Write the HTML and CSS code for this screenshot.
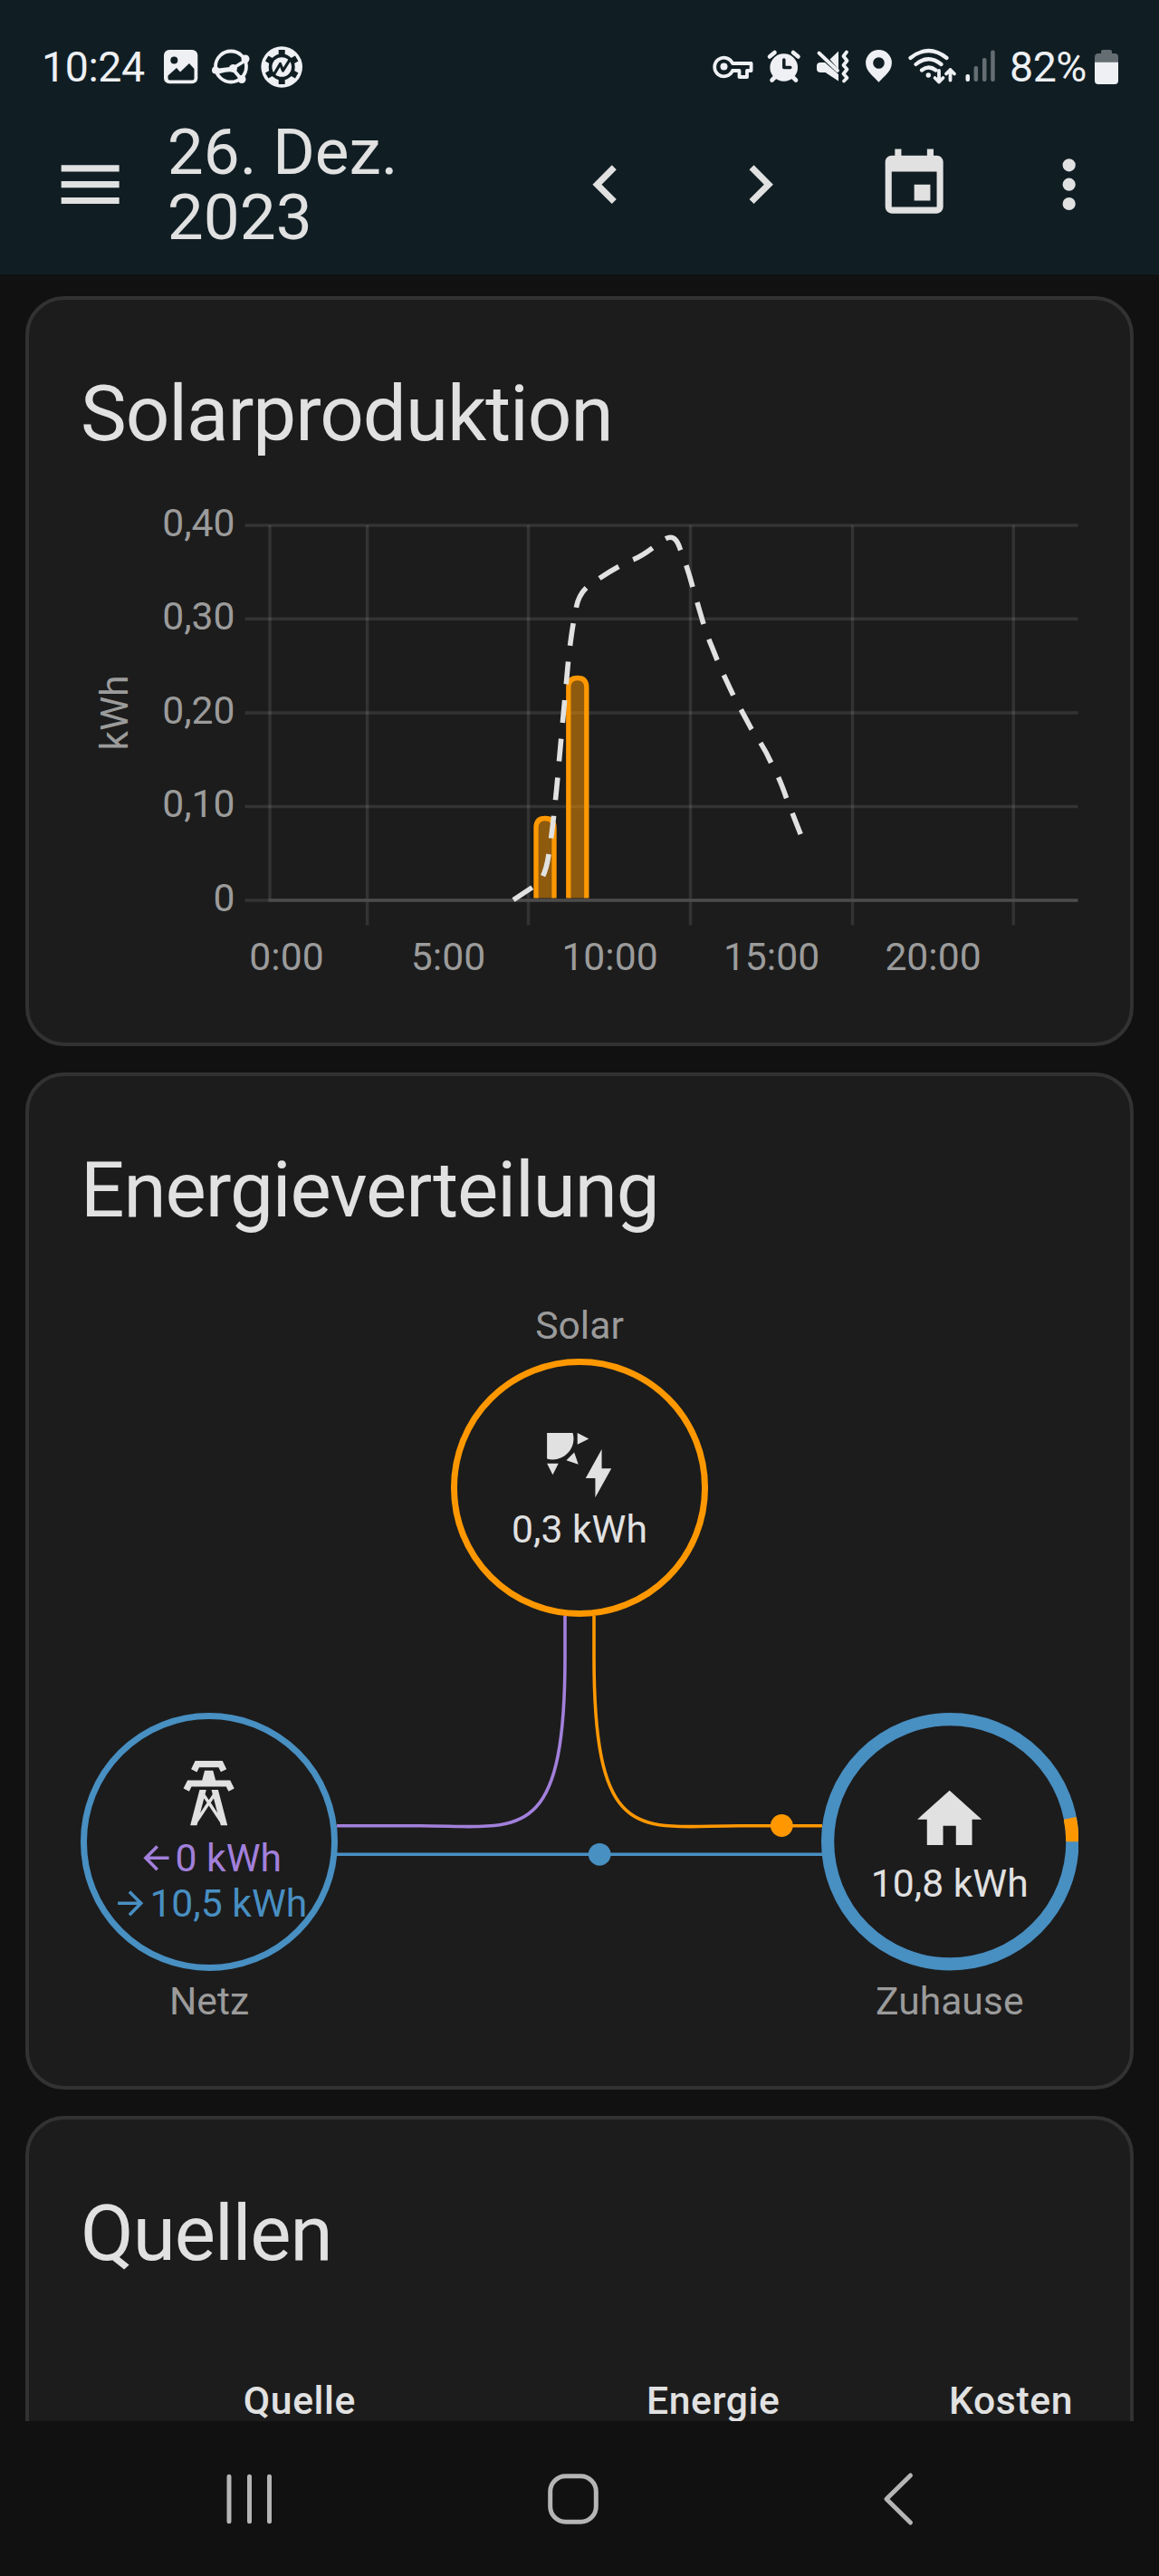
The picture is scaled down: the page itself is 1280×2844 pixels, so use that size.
FILE: index.html
```
<!DOCTYPE html>
<html lang="de">
<head>
    <meta charset="UTF-8">
    <title>Energie</title>
    <meta name="viewport" content="width=device-width, initial-scale=1.0">
    <link rel="stylesheet" href="styles.css">
</head>
<body>
    <header>
        <div class="status-bar">
            <span class="clock">10:24</span>
            <svg class="status-left" viewBox="174 46 166 56">
                <rect x="181" y="55" width="37.3" height="37.3" rx="6"/>
                <circle class="cut" cx="192.3" cy="66.5" r="4"/>
                <path class="cut" d="M185.5 83.5L195 75l4 4.5 10-9.5 5.5 6v10.5a2 2 0 0 1-2 2H187.5a2 2 0 0 1-2-2Z"/>
                <!-- ball with joints -->
                <g class="line">
                    <circle cx="255" cy="73.5" r="17"/>
                    <path d="M237 78l20-2.500 16-10M257 76l10 12M240 80q9-3 17-3"/>
                </g>
                <circle cx="257.5" cy="75.5" r="4.5"/>
                <circle cx="271" cy="65" r="4.5"/>
                <circle cx="267" cy="87.5" r="4.5"/>
                <circle cx="238" cy="77.5" r="4"/>
                <!-- gear badge -->
                <circle cx="311.2" cy="74" r="22.8"/>
                <circle class="cut" cx="311.2" cy="74" r="14.5"/>
                <path class="teeth" d="M311.200 55v38M294.700 64.500l33 19M294.700 83.500l33-19"/>
                <circle cx="311.2" cy="74" r="10.8"/>
                <path class="slash" d="M303 81.500l6.500-11 3 7.500 7.500-12"/>
            </svg>
            <svg class="status-right" viewBox="780 46 326 56">
                <path class="line" d="M809 70h20.600v8H825v7h-8.500v-7H809a10.300 10.300 0 1 1 0-8Z"/>
                <circle cx="799.5" cy="73.5" r="4"/>
                <circle cx="865.7" cy="74.5" r="15.3"/>
                <path class="thick" d="M850 62.500l5.500-4.500M876 58l5.500 4.500M856 85l-3.500 3.500M875.500 85l3.500 3.500"/>
                <path class="cutline" d="M865.800 66v8.500h7"/>
                <path d="M926 56.500v20L916.500 65.500ZM902 73q0-4 4-4h5l15 13v7.500L911.500 80h-5q-4.500 0-4.500-4Z"/>
                <path class="line" d="M904.500 58.500L925 78M935 57.500l-3.500 4.500 4 5-4 5 4 4.500-4 5 4 4.500-3.500 3.500"/>
                <path d="M970.500 55a14.400 14.400 0 0 0-14.400 14.400c0 9.500 9 14.600 14.400 21.400 5.400-6.800 14.400-11.900 14.400-21.400A14.400 14.400 0 0 0 970.500 55Zm0 8.200a6.300 6.300 0 1 1 0 12.600a6.300 6.300 0 0 1 0-12.600Z"/>
                <path class="arc" d="M1005.500 64q20-16 40 0M1011.500 71q13.800-11.500 28 0M1018 77.500q7.500-6 15.500 0"/>
                <circle cx="1025.3" cy="83" r="2.7"/>
                <path class="line" d="M1037 78v12.500M1032.500 86l4.500 4.500 4.500-4.500M1049.500 88.500V77M1045 81.500l4.500-4.500 4.500 4.500"/>
                <rect x="1066.5" y="82" width="4.5" height="8" rx="2"/>
                <g class="dim">
                    <rect x="1075.6" y="73" width="4.5" height="17" rx="2"/>
                    <rect x="1085" y="64" width="4.5" height="26" rx="2"/>
                    <rect x="1094.2" y="55.5" width="4.5" height="34.5" rx="2"/>
                </g>
            </svg>
            <span class="percent">82%</span>
            <svg class="battery" viewBox="0 0 26 38">
                <path class="dim" d="M7 4V2q0-2 2-2h8q2 0 2 2v2h3q4 0 4 4v6H0V8q0-4 4-4Z"/>
                <path d="M0 13.800h26V34q0 4-4 4H4q-4 0-4-4Z"/>
            </svg>
        </div>
        <div class="toolbar">
            <div class="icon-btn"><svg viewBox="0 0 24 24"><path d="M3,6H21V8H3V6M3,11H21V13H3V11M3,16H21V18H3V16Z"/></svg></div>
            <div class="date">26. Dez. 2023</div>
            <div class="icon-btn"><svg viewBox="0 0 24 24"><path d="M15.41,16.58L10.83,12L15.41,7.41L14,6L8,12L14,18L15.41,16.58Z"/></svg></div>
            <div class="icon-btn"><svg viewBox="0 0 24 24"><path d="M8.59,16.58L13.17,12L8.59,7.41L10,6L16,12L10,18L8.59,16.58Z"/></svg></div>
            <div class="icon-btn"><svg viewBox="0 0 24 24"><path d="M19,19H5V8H19M16,1V3H8V1H6V3H5C3.89,3 3,3.89 3,5V19A2,2 0 0,0 5,21H19A2,2 0 0,0 21,19V5C21,3.89 20.1,3 19,3H18V1M17,12H12V17H17V12Z"/></svg></div>
            <div class="icon-btn"><svg viewBox="0 0 24 24"><path d="M12,16A2,2 0 0,1 14,18A2,2 0 0,1 12,20A2,2 0 0,1 10,18A2,2 0 0,1 12,16M12,10A2,2 0 0,1 14,12A2,2 0 0,1 12,14A2,2 0 0,1 10,12A2,2 0 0,1 12,10M12,4A2,2 0 0,1 14,6A2,2 0 0,1 12,8A2,2 0 0,1 10,6A2,2 0 0,1 12,4Z"/></svg></div>
        </div>
    </header>

    <main>
        <section class="card card-solar">
            <h1>Solarproduktion</h1>
            <svg class="chart" viewBox="32 544 1216 606">
                <g class="grid">
                    <path d="M270.500 580H1190.500M270.500 683.200H1190.500M270.500 787H1190.500M270.500 890.500H1190.500M270.500 994H298"/>
                    <path d="M298 580V994M405.600 580V1021.500M583.500 580V1021.500M762.500 580V1021.500M941.500 580V1021.500M1119.300 580V1021.500"/>
                </g>
                <path class="base" d="M296.500 994H1190.500"/>
                <g class="bars">
                    <path d="M592 991.500V914q0-10.500 10-10.500t10 10.500v77.500"/>
                    <path d="M627.800 991.500V759q0-10.500 10-10.500t10 10.500v232.500"/>
                </g>
                <path class="forecast" d="M567 993.500L592 977Q602 970 605.900 944Q612 905 617.400 841L627.500 731Q631 697 636.200 671.400C639 656 646 648 661 639.200C676 629 690 621.500 698.700 618C712 613 724 602 732 596.500C742 590 747 593 751.500 607C757 620 762 637 765 648L777 689C780 700 786 713 792 728.600C799 745 803 753 810 768C818 783 823 792 830 805C838 817 845 827 851.600 842C860 858 863 865 868.500 881L884.200 921"/>
                <g class="y-labels">
                    <text x="259.5" y="592">0,40</text>
                    <text x="259.5" y="695">0,30</text>
                    <text x="259.5" y="799">0,20</text>
                    <text x="259.5" y="902">0,10</text>
                    <text x="259.5" y="1005.5">0</text>
                </g>
                <g class="x-labels">
                    <text x="316.5" y="1071">0:00</text>
                    <text x="495" y="1071">5:00</text>
                    <text x="673.5" y="1071">10:00</text>
                    <text x="852" y="1071">15:00</text>
                    <text x="1030.5" y="1071">20:00</text>
                    <text transform="translate(141 787) rotate(-90)">kWh</text>
                </g>
            </svg>
        </section>

        <section class="card card-flow">
            <h1>Energieverteilung</h1>
            <div class="flow">
                <svg class="lines" viewBox="32 1401 1216 903">
                    <path class="return" d="M624 1784V1829c0,213 -53,186.700 -160,186.700H372"/>
                    <path class="solar" d="M656 1784V1829c0,213 53,186.700 160,186.700H908"/>
                    <path class="grid-line" d="M372 2047.300H908"/>
                    <circle class="solar-dot" cx="863.3" cy="2015.5" r="12.4"/>
                    <circle class="grid-dot" cx="662.2" cy="2047.3" r="12.4"/>
                </svg>
                <div class="node node-solar">
                    <span class="label">Solar</span>
                    <div class="circle">
                        <svg class="icon" viewBox="0 0 24 24"><path d="M11.45,2V5.55L15,3.77L11.45,2M10.45,8L8,10.46L11.75,11.71L10.45,8M2,11.45L3.77,15L5.55,11.45H2M10,2H2V10C2.57,10.17 3.17,10.25 3.77,10.25C7.35,10.26 10.26,7.35 10.27,3.75C10.26,3.16 10.17,2.57 10,2M17,22V16H14L19,7V13H22L17,22Z"/></svg>
                        <span>0,3 kWh</span>
                    </div>
                </div>
                <div class="node node-grid">
                    <div class="circle">
                        <svg class="icon" viewBox="0 0 24 24"><path d="M8.28,5.45L6.5,4.55L7.76,2H16.23L17.5,4.55L15.72,5.44L15,4H9L8.28,5.45M18.62,8H14.09L13.3,5H10.7L9.91,8H5.38L4.1,10.55L5.89,11.44L6.62,10H17.38L18.1,11.45L19.89,10.56L18.62,8M17.77,22H15.7L15.46,21.1L12,15.9L8.53,21.1L8.3,22H6.23L9.12,11H11.19L10.83,12.35L12,14.1L13.16,12.35L12.81,11H14.88L17.77,22M11.4,15L10.5,13.65L9.32,18.13L11.4,15M14.68,18.12L13.5,13.64L12.6,15L14.68,18.12Z"/></svg>
                        <span class="to-grid"><svg viewBox="0 0 24 24"><path d="M20,11V13H8L13.5,18.5L12.08,19.92L4.16,12L12.08,4.08L13.5,5.5L8,11H20Z"/></svg>0 kWh</span>
                        <span class="from-grid"><svg viewBox="0 0 24 24"><path d="M4,11V13H16L10.5,18.5L11.92,19.92L19.84,12L11.92,4.08L10.5,5.5L16,11H4Z"/></svg>10,5 kWh</span>
                    </div>
                    <span class="label">Netz</span>
                </div>
                <div class="node node-home">
                    <div class="circle">
                        <svg class="ring" viewBox="0 0 80 80">
                            <circle class="ring-grid" cx="40" cy="40" r="38"/>
                            <path class="ring-solar" d="M78 40A38 38 0 0 0 77.260 32.700"/>
                        </svg>
                        <svg class="icon" viewBox="0 0 24 24"><path d="M10,20V14H14V20H19V12H22L12,3L2,12H5V20H10Z"/></svg>
                        <span>10,8 kWh</span>
                    </div>
                    <span class="label">Zuhause</span>
                </div>
            </div>
        </section>

        <section class="card card-sources">
            <h1>Quellen</h1>
            <div class="table-head">
                <span>Quelle</span>
                <span>Energie</span>
                <span>Kosten</span>
            </div>
        </section>
    </main>

    <nav>
        <svg viewBox="0 0 60 60"><path d="M8 5.300V54.700M30.500 5.300V54.700M52.500 5.300V54.700"/></svg>
        <svg viewBox="0 0 60 60"><rect x="3.7" y="4.7" width="50.6" height="50.6" rx="17"/></svg>
        <svg viewBox="0 0 60 60"><path d="M42.500 4L16 30L42.500 56"/></svg>
    </nav>
</body>
</html>
```
FILE: styles.css
```
* {
    box-sizing: border-box;
}
body {
    margin: 0;
    width: 1280px;
    height: 2844px;
    overflow: hidden;
    background: #111;
    color: #e1e1e1;
    font-family: Roboto, sans-serif;
    font-size: 42.67px;
    display: flex;
    flex-direction: column;
}
svg {
    display: block;
    flex: none;
    fill: currentColor;
}

/* Header */
header {
    height: 303px;
    flex: none;
    background: #101e24;
}
.status-bar {
    height: 104px;
    padding: 44px 0 0 46px;
    display: flex;
    align-items: flex-start;
    color: #eef0f3;
    font-size: 46.5px;
}
.clock, .percent {
    line-height: 60px;
}
.clock {
    width: 128px;
    letter-spacing: -0.4px;
}
.status-left, .status-right {
    height: 56px;
    margin-top: 2px;
}
.status-left {
    width: 166px;
}
.status-right {
    width: 326px;
    margin-left: 440px;
}
.percent {
    width: 102.5px;
    padding-left: 9px;
    letter-spacing: -0.5px;
}
.battery {
    width: 26px;
    height: 38px;
    margin-top: 10.5px;
}
.dim {
    opacity: 0.38;
}
.cut {
    fill: #101e24;
}
.line, .arc, .thick, .cutline, .teeth, .slash {
    fill: none;
    stroke: currentColor;
    stroke-width: 3.8;
    stroke-linecap: round;
    stroke-linejoin: round;
}
.arc {
    stroke-width: 4.2;
}
.thick {
    stroke-width: 4.6;
}
.cutline {
    stroke: #101e24;
    stroke-width: 3.5;
}
.teeth {
    stroke: #101e24;
    stroke-width: 7;
    stroke-linecap: butt;
}
.slash {
    stroke: #101e24;
    stroke-width: 3.2;
}
.toolbar {
    height: 199px;
    padding: 0 14.2px;
    display: flex;
    align-items: center;
}
.icon-btn {
    width: 170.67px;
    flex: none;
    display: flex;
    justify-content: center;
}
.icon-btn svg {
    width: 85.33px;
    height: 85.33px;
}
.date {
    flex: 1;
    padding-right: 120px;
    font-size: 71.1px;
    line-height: 71.1px;
}

/* Cards */
main {
    height: 2370px;
    flex: none;
    overflow: hidden;
    padding: 24px 28px 0;
    display: flex;
    flex-direction: column;
    gap: 29px;
}
.card {
    flex: none;
    background: #1c1c1c;
    border: 4px solid #323232;
    border-radius: 43px;
    overflow: hidden;
}
.card h1 {
    margin: 0;
    padding: 41px 57px 1px;
    font-size: 85.33px;
    line-height: 171px;
    font-weight: 400;
    letter-spacing: -0.012em;
}
.card-solar {
    height: 828px;
}
.card-flow {
    height: 1123px;
}
.card-sources {
    height: 600px;
}

/* Chart */
.chart {
    width: 1216px;
    height: 606px;
}
.chart text {
    fill: #9b9b9b;
    text-anchor: middle;
}
.chart .y-labels text {
    text-anchor: end;
}
.grid {
    fill: none;
    stroke: #e1e1e1;
    stroke-opacity: 0.12;
    stroke-width: 3.5;
}
.base {
    stroke: #4d4d4d;
    stroke-width: 3.5;
}
.bars {
    fill: rgba(255, 152, 0, 0.5);
    stroke: #ff9800;
    stroke-width: 5.3;
}
.forecast {
    fill: none;
    stroke: #e1e1e1;
    stroke-width: 5.6;
    stroke-dasharray: 24.9 17.8;
}

/* Energy flow */
.flow {
    position: relative;
    height: 903px;
}
.lines {
    width: 1216px;
    height: 903px;
    fill: none;
    stroke-width: 3.6;
}
.return {
    stroke: #a280db;
}
.solar {
    stroke: #ff9800;
}
.grid-line {
    stroke: #488fc2;
}
.solar-dot {
    fill: #ff9800;
}
.grid-dot {
    fill: #488fc2;
}
.node {
    position: absolute;
    width: 284.5px;
    display: flex;
    flex-direction: column;
    align-items: center;
    line-height: 50px;
}
.label {
    color: #9b9b9b;
}
.circle {
    position: relative;
    width: 284.5px;
    height: 284.5px;
    padding-top: 3.5px;
    border: 7.1px solid;
    border-radius: 50%;
    display: flex;
    flex-direction: column;
    align-items: center;
    justify-content: center;
    white-space: nowrap;
}
.circle > span {
    color: #e1e1e1;
}
.icon {
    width: 85.33px;
    height: 85.33px;
    margin-bottom: 3.5px;
    color: #e1e1e1;
}
.node-solar {
    left: 465.75px;
    top: 37px;
}
.node-solar .label {
    margin-bottom: 12px;
}
.node-solar .circle {
    border-color: #ff9800;
}
.node-grid {
    left: 56.75px;
    top: 490px;
}
.node-grid .circle {
    padding: 0 0 3.5px;
    border-color: #488fc2;
}
.node .circle .to-grid, .node .circle .from-grid {
    display: flex;
    align-items: center;
}
.node .circle .to-grid {
    color: #a280db;
}
.node .circle .from-grid {
    color: #488fc2;
}
.circle span svg {
    width: 42.67px;
    height: 42.67px;
}
.node-home {
    left: 874.5px;
    top: 490px;
}
.node-home .circle {
    border: none;
}
.node-grid .label, .node-home .label {
    margin-top: 8.5px;
}
.ring {
    position: absolute;
    inset: 0;
    fill: none;
    stroke-width: 4;
}
.ring-grid {
    stroke: #488fc2;
}
.ring-solar {
    stroke: #ff9800;
}

/* Sources */
.table-head {
    display: grid;
    grid-template-columns: 447px 382.5px 323.5px;
    margin-top: 72px;
    font-weight: 500;
    letter-spacing: 0.6px;
    line-height: 50px;
}
.table-head span {
    text-align: right;
}
.table-head span:first-child {
    padding-right: 86px;
}

/* Android navigation */
nav {
    height: 171px;
    display: flex;
    justify-content: space-between;
    align-items: center;
    padding: 0 257px 0 244.5px;
}
nav svg {
    width: 60px;
    height: 60px;
    fill: none;
    color: #b5b5b5;
    stroke: currentColor;
    stroke-width: 5;
    stroke-linecap: round;
    stroke-linejoin: round;
}
```
